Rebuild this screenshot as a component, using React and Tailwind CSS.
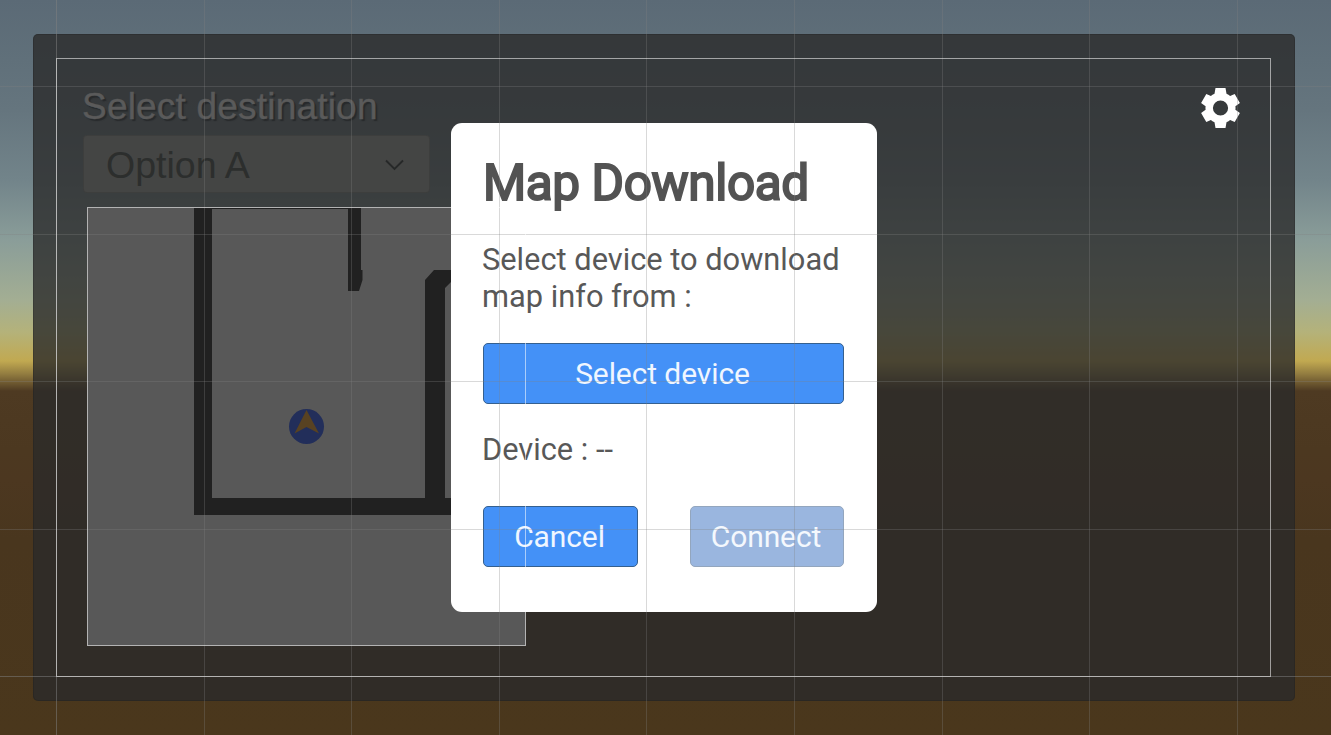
import React from "react";

const GRID_X = [56, 204, 351, 499, 646, 794, 942, 1089, 1237];
const GRID_Y = [86, 234, 381, 529, 676];

function GearIcon() {
  return (
    <svg width="40" height="40" viewBox="-19.5 -20 40 40" className="block" fill="#fff">
      <path
        fillRule="evenodd"
        d="M-5 -20H5L6 -14.2Q8.2 -13.2 9.6 -12L14.2 -14L19.4 -5L14.9 -1.8Q15.2 0 14.9 1.8L19.4 5L14.2 14L9.6 12Q8.2 13.2 6 14.2L5 20H-5L-6 14.2Q-8.2 13.2 -9.6 12L-14.2 14L-19.4 5L-14.9 1.8Q-15.2 0 -14.9 -1.8L-19.4 -5L-14.2 -14L-9.6 -12Q-8.2 -13.2 -6 -14.2ZM0 -7.6A7.6 7.6 0 1 0 0 7.6A7.6 7.6 0 1 0 0 -7.6Z"
      />
    </svg>
  );
}

function FloorMap() {
  return (
    <svg width="439" height="439" viewBox="87 207 439 439" className="block shrink-0 bg-[#585858]">
      <g fill="#212121">
        <path d="M194 208H212V498H425V280L434 270H526V282H451L445 288V498H526V515H194Z" />
        <path d="M212 208H361V270H362.500V280L359 291H348V209H212Z" />
      </g>
      <circle cx="306.500" cy="426.500" r="17.500" fill="#222e5a" />
      <path d="M306.500 410L319 433.500L306.500 427L294.500 433.500Z" fill="#584222" />
    </svg>
  );
}

function Dropdown() {
  return (
    <div className="flex h-[58px] w-[347px] items-center justify-between rounded-[4px] bg-[#444544] pr-[26px] pl-[23px] shadow-[inset_0_0_0_1px_rgba(30,30,30,0.15)]">
      <span className="pt-px text-[37.5px] leading-[42px] whitespace-nowrap text-[#2c2e2d]">Option A</span>
      <svg width="19" height="12" viewBox="0 0 19 12" fill="none" stroke="#262828" strokeWidth="1.900" className="mt-0.5">
        <path d="M1 1.500L9.500 10L18 1.500" />
      </svg>
    </div>
  );
}

function Button({ className, children }) {
  return (
    <button
      className={
        "flex h-[61px] items-center justify-center rounded-[5px] border pr-0.5 pb-px text-[30px] leading-[37px] tracking-[-0.1px] whitespace-nowrap " +
        className
      }
    >
      {children}
    </button>
  );
}

function Modal() {
  return (
    <div className="flex h-[489px] w-[426px] flex-col rounded-[11px] bg-white px-8 pt-[30px] font-['Roboto',sans-serif] text-[#585858]">
      <h1 className="text-[49.500px] leading-[60px] font-normal tracking-[-0.4px] whitespace-nowrap text-[#535353] [-webkit-text-stroke:2px_#535353]">
        Map Download
      </h1>
      <p className="mt-7 -ml-px text-[30.8px] leading-[37px] whitespace-nowrap">
        Select device to download
        <br />
        map info from :
      </p>
      <Button className="mt-7 w-[361px] border-[#35608f] bg-[#4491f7] text-[#f0f6ff]">Select device</Button>
      <p className="mt-[27px] -ml-px text-[30.8px] leading-[37px]">Device : --</p>
      <div className="mt-[38px] flex w-[361px] justify-between">
        <Button className="w-[155px] border-[#35608f] bg-[#4491f7] text-[#f0f6ff]">Cancel</Button>
        <Button className="w-[154px] border-[#93a6be] bg-[#9ab6df] text-[#f4f8fd]">Connect</Button>
      </div>
    </div>
  );
}

function Guides() {
  return (
    <svg width="1331" height="735" className="pointer-events-none absolute inset-0" fill="none" shapeRendering="crispEdges">
      <g stroke="#808080" strokeOpacity="0.3">
        {GRID_X.map((x) => (
          <path key={x} d={`M${x + 0.5} 0V735`} />
        ))}
        {GRID_Y.map((y) => (
          <path key={y} d={`M0 ${y + 0.5}H1331`} />
        ))}
        <path d="M56.500 0V735M0 676.500H1331" />
      </g>
      <g stroke="#fff" strokeOpacity="0.55">
        <rect x="56.500" y="58.500" width="1214" height="618" />
        <rect x="87.500" y="207.500" width="438" height="438" />
      </g>
    </svg>
  );
}

export default function App() {
  return (
    <div className="relative h-[735px] w-[1331px] overflow-hidden bg-[linear-gradient(180deg,#5b6a76_0px,#60707a_60px,#65757e_110px,#72848a_180px,#8a9d99_240px,#a3ae93_300px,#b4b27a_332px,#c1a951_361px,#927c40_374px,#4e3a22_391px,#4c3820_450px,#4c3720_480px,#49361e_540px,#4a371c_735px)] px-[33px] pt-[34px] font-['Liberation_Sans',sans-serif]">
      <div className="h-[667px] w-[1262px] rounded-[5px] bg-[rgba(42,42,42,0.79)] pt-[51px] pr-[54px] pl-[50px] shadow-[inset_0_0_0_1px_rgba(20,20,20,0.2)]">
        <div className="flex items-start justify-between">
          <div className="flex flex-col">
            <div className="-ml-px h-[50px] text-[37px] leading-[44px] tracking-[0.2px] whitespace-nowrap text-[#5a5a5a] [-webkit-text-stroke:0.4px_#5a5a5a] [text-shadow:2px_2px_1px_rgba(30,32,34,0.6)]">
              Select destination
            </div>
            <Dropdown />
            <div className="mt-[14px] ml-1">
              <FloorMap />
            </div>
          </div>
          <div className="pt-[3px]">
            <GearIcon />
          </div>
        </div>
      </div>
      <div className="absolute inset-0 flex items-start justify-center pt-[123px] pr-[3px]">
        <Modal />
      </div>
      <Guides />
    </div>
  );
}
